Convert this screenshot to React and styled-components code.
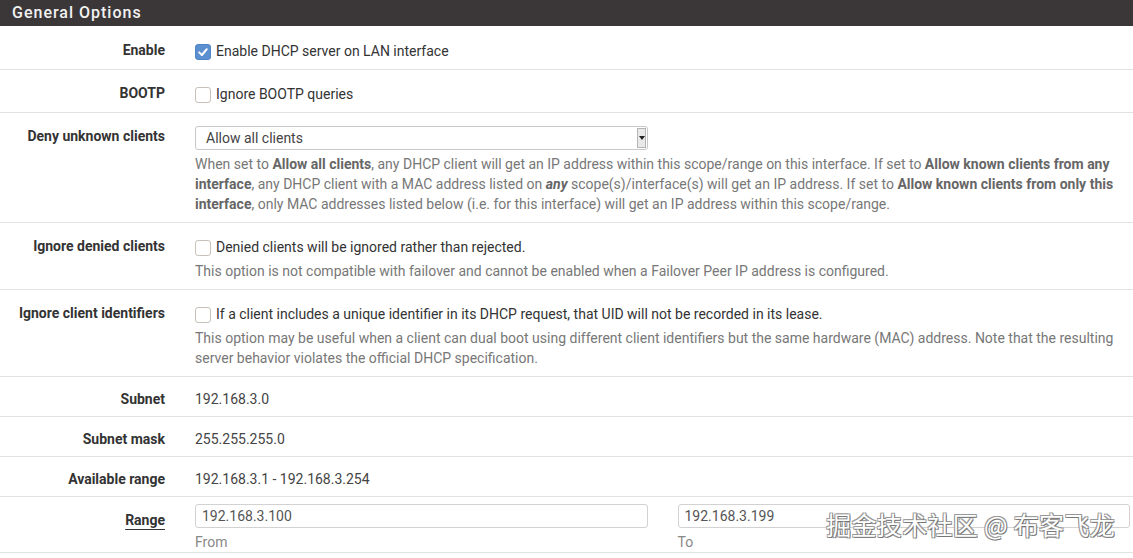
import React from "react";
import styled, { createGlobalStyle } from "styled-components";

const GlobalStyle = createGlobalStyle`
  body {
    margin: 0;
    background: #fff;
    font-family: Roboto, "Liberation Sans", sans-serif;
    font-size: 14px;
    color: #333;
  }
`;

const Check = ({ checked }) => (
  <StyledCheck checked={checked}>
    {checked && (
      <svg width="12" height="12" viewBox="0 0 12 12">
        <path
          d="M2.2 6.4 L4.9 9 L9.8 3.2"
          fill="none"
          stroke="#fff"
          strokeWidth="2"
          strokeLinecap="round"
          strokeLinejoin="round"
        />
      </svg>
    )}
  </StyledCheck>
);

const CheckLine = ({ checked, children }) => (
  <StyledCheckLine>
    <Check checked={checked} />
    <span>{children}</span>
  </StyledCheckLine>
);

const Row = ({ label, underline, variant, children }) => (
  <StyledRow variant={variant}>
    <StyledLabel underline={underline} variant={variant}>
      <span>{label}</span>
    </StyledLabel>
    <StyledContent>{children}</StyledContent>
  </StyledRow>
);

const rowPadding = {
  default: "13px 18px 8px 0",
  value: "12px 18px 7px 0",
  compact: "7px 3px 0 0",
};

const App = () => {
  return (
    <>
      <GlobalStyle />
      <Panel>
        <PanelHeading>General Options</PanelHeading>
        <Row label="Enable">
          <CheckLine checked>Enable DHCP server on LAN interface</CheckLine>
        </Row>
        <Row label="BOOTP">
          <CheckLine>Ignore BOOTP queries</CheckLine>
        </Row>
        <Row label="Deny unknown clients">
          <FakeSelect>
            <span>Allow all clients</span>
            <SelectArrow>
              <svg width="6" height="4" viewBox="0 0 6 4">
                <path d="M0 0 H6 L3 4 Z" fill="#222" />
              </svg>
            </SelectArrow>
          </FakeSelect>
          <HelpText>
            When set to <b>Allow all clients</b>, any DHCP client will get an
            IP address within this scope/range on this interface. If set to{" "}
            <b>Allow known clients from any interface</b>, any DHCP client with
            a MAC address listed on <b><i>any</i></b> scope(s)/interface(s) will
            get an IP address. If set to{" "}
            <b>Allow known clients from only this interface</b>, only MAC
            addresses listed below (i.e. for this interface) will get an IP
            address within this scope/range.
          </HelpText>
        </Row>
        <Row label="Ignore denied clients">
          <CheckLine>Denied clients will be ignored rather than rejected.</CheckLine>
          <HelpText>
            This option is not compatible with failover and cannot be enabled
            when a Failover Peer IP address is configured.
          </HelpText>
        </Row>
        <Row label="Ignore client identifiers">
          <CheckLine>
            If a client includes a unique identifier in its DHCP request, that
            UID will not be recorded in its lease.
          </CheckLine>
          <HelpText>
            This option may be useful when a client can dual boot using
            different client identifiers but the same hardware (MAC) address.
            Note that the resulting server behavior violates the official DHCP
            specification.
          </HelpText>
        </Row>
        <Row label="Subnet" variant="value">
          <Value>192.168.3.0</Value>
        </Row>
        <Row label="Subnet mask" variant="value">
          <Value>255.255.255.0</Value>
        </Row>
        <Row label="Available range" variant="value">
          <Value>192.168.3.1 - 192.168.3.254</Value>
        </Row>
        <Row label="Range" underline variant="compact">
          <RangeGrid>
            <div>
              <TextInput defaultValue="192.168.3.100" />
              <InputCaption>From</InputCaption>
            </div>
            <div>
              <TextInput defaultValue="192.168.3.199" />
              <InputCaption>To</InputCaption>
            </div>
          </RangeGrid>
        </Row>
        <Watermark>掘金技术社区 @ 布客飞龙</Watermark>
      </Panel>
    </>
  );
};

const Panel = styled.div`
  position: relative;
  width: 1133px;
  height: 558px;
  overflow: hidden;
`;

const PanelHeading = styled.div`
  height: 26px;
  background: #3b3738;
  color: #f2f2f2;
  font-size: 16px;
  font-weight: 500;
  letter-spacing: 1px;
  line-height: 25px;
  padding-left: 12px;
  border-bottom: 1px solid #fff;
`;

const StyledRow = styled.div`
  display: grid;
  grid-template-columns: 165px 1fr;
  column-gap: 30px;
  padding: ${({ variant }) => rowPadding[variant || "default"]};
  border-bottom: 1px solid #e2e2e2;
  &:last-of-type {
    border-bottom: none;
  }
`;

const StyledLabel = styled.div`
  text-align: right;
  font-weight: 700;
  color: #333;
  line-height: 20px;
  padding-top: ${({ variant }) => (variant === "compact" ? "6px" : "0")};
  span {
    text-decoration: ${({ underline }) => (underline ? "underline" : "none")};
    text-underline-offset: 4px;
    text-decoration-thickness: 1px;
  }
`;

const StyledContent = styled.div`
  min-width: 0;
`;

const StyledCheckLine = styled.div`
  display: flex;
  align-items: center;
  gap: 5px;
  min-height: 21px;
  line-height: 20px;
  color: #333;
`;

const StyledCheck = styled.span`
  flex: none;
  width: 16px;
  height: 16px;
  margin-top: 3px;
  box-sizing: border-box;
  border-radius: 3px;
  border: 1px solid ${({ checked }) => (checked ? "#4f85c8" : "#c9c2b8")};
  background: ${({ checked }) => (checked ? "#5b8fcf" : "#fff")};
  display: flex;
  align-items: center;
  justify-content: center;
`;

const FakeSelect = styled.div`
  width: 453px;
  height: 24px;
  box-sizing: border-box;
  border: 1px solid #c8c8c8;
  border-radius: 3px;
  display: flex;
  align-items: center;
  justify-content: space-between;
  padding: 0 1px 0 10px;
  color: #444;
  font-size: 14px;
`;

const SelectArrow = styled.span`
  width: 9px;
  height: 20px;
  box-sizing: border-box;
  border: 1px solid #b5b5b5;
  background: #e9e9e9;
  display: flex;
  align-items: center;
  justify-content: center;
`;

const HelpText = styled.div`
  margin-top: 4px;
  color: #777;
  line-height: 20px;
  b {
    color: #666;
  }
`;

const Value = styled.div`
  line-height: 20px;
  color: #444;
`;

const RangeGrid = styled.div`
  display: grid;
  grid-template-columns: 1fr 1fr;
  column-gap: 30px;
`;

const TextInput = styled.input`
  display: block;
  width: 100%;
  height: 24px;
  box-sizing: border-box;
  border: 1px solid #d2d2d2;
  border-radius: 3px;
  padding: 0 6px;
  font-family: Roboto, "Liberation Sans", sans-serif;
  font-size: 14px;
  color: #555;
  outline: none;
`;

const InputCaption = styled.div`
  margin-top: 4px;
  color: #888;
  line-height: 20px;
`;

const Watermark = styled.div`
  position: absolute;
  right: 18px;
  bottom: 16px;
  font-family: "Noto Sans CJK SC", sans-serif;
  font-size: 25px;
  color: #fff;
  text-shadow: 1px 1px 0 #777, -1px -1px 0 #999, 1px -1px 0 #999,
    -1px 1px 0 #999;
  letter-spacing: 0.3px;
`;

export default App;
